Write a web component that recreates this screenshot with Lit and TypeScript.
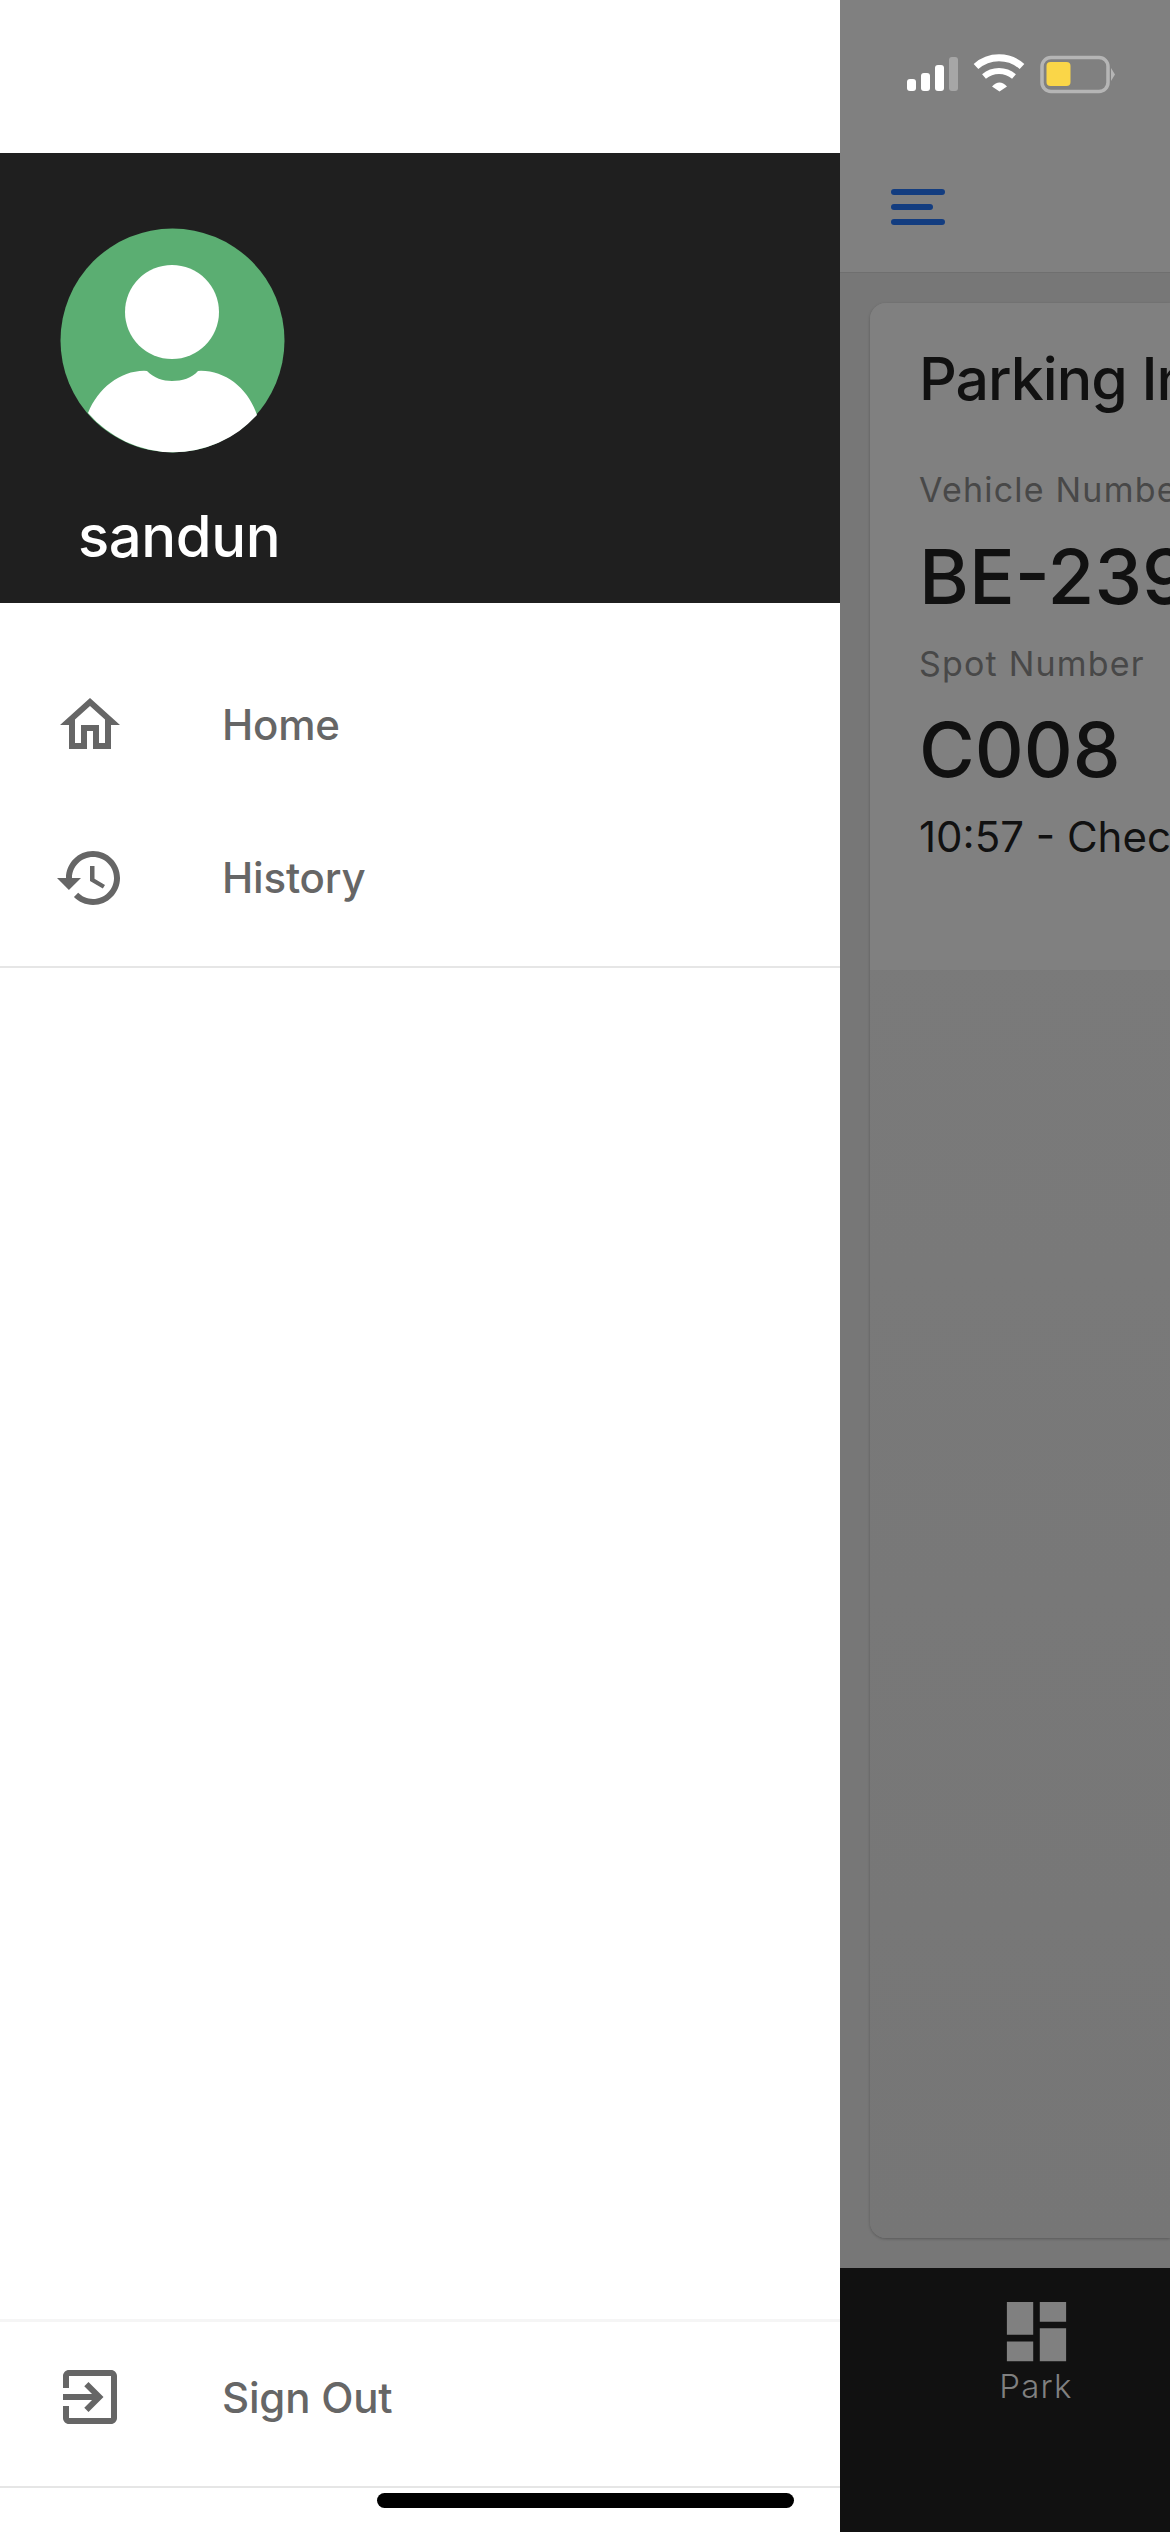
import { LitElement, css, html, svg } from 'lit';
import { customElement } from 'lit/decorators.js';

const icons = {
  home: svg`<path d="M12 5.69l5 4.5V18h-2v-6H9v6H7v-7.81l5-4.5M12 3L2 12h3v8h6v-6h2v6h6v-8h3L12 3z" />`,
  history: svg`<path d="M13 3c-4.97 0-9 4.03-9 9H1l3.89 3.89.07.14L9 12H6c0-3.87 3.13-7 7-7s7 3.13 7 7-3.13 7-7 7c-1.93 0-3.68-.79-4.94-2.06l-1.42 1.42C8.27 19.99 10.51 21 13 21c4.97 0 9-4.03 9-9s-4.03-9-9-9zm-1 5v5l4.28 2.54.72-1.21-3.5-2.08V8H12z" />`,
  exit: svg`<path d="M10.09 15.59L11.5 17l5-5-5-5-1.41 1.41L12.67 11H3v2h9.67l-2.58 2.59zM19 3H5c-1.11 0-2 .9-2 2v4h2V5h14v14H5v-4H3v4c0 1.1.89 2 2 2h14c1.1 0 2-.9 2-2V5c0-1.1-.9-2-2-2z" />`,
  dashboard: svg`<path d="M3 13h8V3H3v10zm0 8h8v-6H3v6zm10 0h8V11h-8v10zm0-18v6h8V3h-8z" />`,
};

@customElement('app-root')
export class AppRoot extends LitElement {
  static styles = css`
    :host {
      display: block;
      width: 1170px;
      height: 2532px;
      font-family: Inter, 'Liberation Sans', sans-serif;
    }

    .screen {
      position: relative;
      display: flex;
      width: 1170px;
      height: 2532px;
      overflow: hidden;
    }

    /* drawer */
    .drawer {
      display: flex;
      flex-direction: column;
      flex: 0 0 840px;
      background: #fff;
    }

    .profile {
      margin-top: 153px;
      height: 450px;
      box-sizing: border-box;
      padding: 75px 0 0 60px;
      background: #1f1f1f;
    }

    .avatar {
      display: block;
      width: 225px;
      height: 225px;
    }

    .name {
      margin: 49px 0 0 18px;
      font-size: 58px;
      line-height: 69px;
      font-weight: 500;
      letter-spacing: -0.4px;
      color: #fff;
    }

    .menu {
      flex: 1;
      padding: 45px 0 0;
    }

    .menu-main {
      padding-bottom: 12px;
      border-bottom: 2px solid #e6e6e6;
    }

    .item {
      display: flex;
      align-items: center;
      gap: 96px;
      height: 153px;
      padding-left: 54px;
      font-size: 42px;
      font-weight: 500;
      letter-spacing: -0.2px;
      color: #666;
    }

    .item svg {
      width: 72px;
      height: 72px;
      fill: #666;
    }

    .signout {
      height: 213px;
      box-sizing: border-box;
      border-top: 3px solid #f5f5f5;
    }

    .signout .item {
      height: 150px;
      padding-bottom: 14px;
      border-bottom: 2px solid #e6e6e6;
    }

    /* app behind the overlay */
    .app {
      display: flex;
      flex-direction: column;
      flex: 0 0 330px;
      overflow: hidden;
      white-space: nowrap;
      background: #777;
    }

    .app-bar {
      height: 273px;
      box-sizing: border-box;
      background: #808080;
      border-bottom: 1px solid #6f6f6f;
    }

    .status {
      display: block;
      margin-left: 60px;
      padding-top: 50px;
      width: 220px;
      height: 50px;
    }

    .burger {
      display: flex;
      flex-direction: column;
      gap: 9px;
      margin: 89px 0 0 51px;
    }

    .burger span {
      width: 54px;
      height: 6px;
      border-radius: 3px;
      background: #133d80;
    }

    .burger span:nth-child(2) {
      width: 42px;
    }

    .content {
      flex: 1;
      padding: 30px 0 30px 30px;
    }

    .card {
      height: 100%;
      border-radius: 16px 0 0 16px;
      background: linear-gradient(#7c7c7c, #767676);
      box-shadow: 0 1px 3px rgba(0, 0, 0, 0.25);
      overflow: hidden;
    }

    .card-top {
      height: 667px;
      box-sizing: border-box;
      padding: 41px 0 0 49px;
      background: #808080;
      color: #111;
    }

    .title {
      font-size: 59px;
      line-height: 70px;
      font-weight: 500;
      letter-spacing: -1px;
    }

    .label {
      margin-top: 56px;
      font-size: 34px;
      line-height: 40px;
      letter-spacing: 1.2px;
      color: #484848;
    }

    .value {
      margin-top: 21px;
      font-size: 76px;
      line-height: 90px;
      font-weight: 500;
    }

    .label.spot {
      margin-top: 23px;
    }

    .value.spot {
      margin-top: 20px;
    }

    .time {
      margin-top: 18px;
      font-size: 42px;
      line-height: 50px;
    }

    .tabs {
      height: 264px;
      background: #111;
    }

    .tab {
      display: flex;
      flex-direction: column;
      align-items: center;
      width: 392px;
      padding-top: 24px;
      font-size: 33px;
      line-height: 30px;
      font-weight: 300;
      letter-spacing: 1.2px;
      color: #808080;
    }

    .tab svg {
      width: 79px;
      height: 79px;
      fill: #808080;
    }

    .home-bar {
      position: absolute;
      left: 377px;
      top: 2493px;
      width: 417px;
      height: 15px;
      border-radius: 8px;
      background: #000;
    }
  `;

  private icon(name: keyof typeof icons) {
    return html`<svg viewBox="0 0 24 24">${icons[name]}</svg>`;
  }

  render() {
    return html`
      <div class="screen">
        <aside class="drawer">
          <div class="profile">
            <svg class="avatar" viewBox="0 0 225 225">
              <circle cx="112.5" cy="112.5" r="112" fill="#5bae72" />
              <circle cx="112" cy="84" r="47" fill="#fff" />
              <path
                fill="#fff"
                d="M28 185C38 160 60 143 84 142.700L87 143C94 150 103 153 112 153C122 153 132 150 138 143L141 142.700C166 143 188 160 197 187A112.500 112.500 0 0 1 28 185Z"
              />
            </svg>
            <div class="name">sandun</div>
          </div>
          <nav class="menu">
            <div class="menu-main">
              <div class="item">${this.icon('home')}<span>Home</span></div>
              <div class="item">${this.icon('history')}<span>History</span></div>
            </div>
          </nav>
          <div class="signout">
            <div class="item">${this.icon('exit')}<span>Sign Out</span></div>
          </div>
        </aside>

        <main class="app">
          <header class="app-bar">
            <svg class="status" viewBox="0 0 220 50">
              <!-- origin is at 900,50 of the page -->
              <g fill="#fff">
                <rect x="7" y="29" width="9" height="12" rx="3" />
                <rect x="21" y="23" width="9" height="18" rx="3" />
                <rect x="35" y="15" width="9" height="26" rx="3" />
              </g>
              <rect x="49" y="7" width="9" height="34" rx="3" fill="#a6a6a6" />
              <g fill="none" stroke="#fff" stroke-linecap="butt">
                <path stroke-width="7" d="M76 16.500A34.500 34.500 0 0 1 122 16.500" />
                <path stroke-width="6" d="M84 26.500A23.500 23.500 0 0 1 114 26.500" />
              </g>
              <path fill="#fff" d="M92 36.500Q99.500 28.500 107 36.500L99.500 41.500Z" />
              <rect
                x="142"
                y="7.500"
                width="66"
                height="34"
                rx="9"
                fill="none"
                stroke="#b5b5b5"
                stroke-width="3.500"
              />
              <rect x="146.500" y="12" width="24" height="24" rx="4" fill="#fad648" />
              <path fill="#b5b5b5" d="M211 18L215 24.500L211 31Z" />
            </svg>
            <div class="burger"><span></span><span></span><span></span></div>
          </header>
          <section class="content">
            <div class="card">
              <div class="card-top">
                <div class="title">Parking Info</div>
                <div class="label">Vehicle Number</div>
                <div class="value">BE-2398</div>
                <div class="label spot">Spot Number</div>
                <div class="value spot">C008</div>
                <div class="time">10:57 - Check in</div>
              </div>
            </div>
          </section>
          <footer class="tabs">
            <div class="tab">${this.icon('dashboard')}<span>Park</span></div>
          </footer>
        </main>

        <div class="home-bar"></div>
      </div>
    `;
  }
}
